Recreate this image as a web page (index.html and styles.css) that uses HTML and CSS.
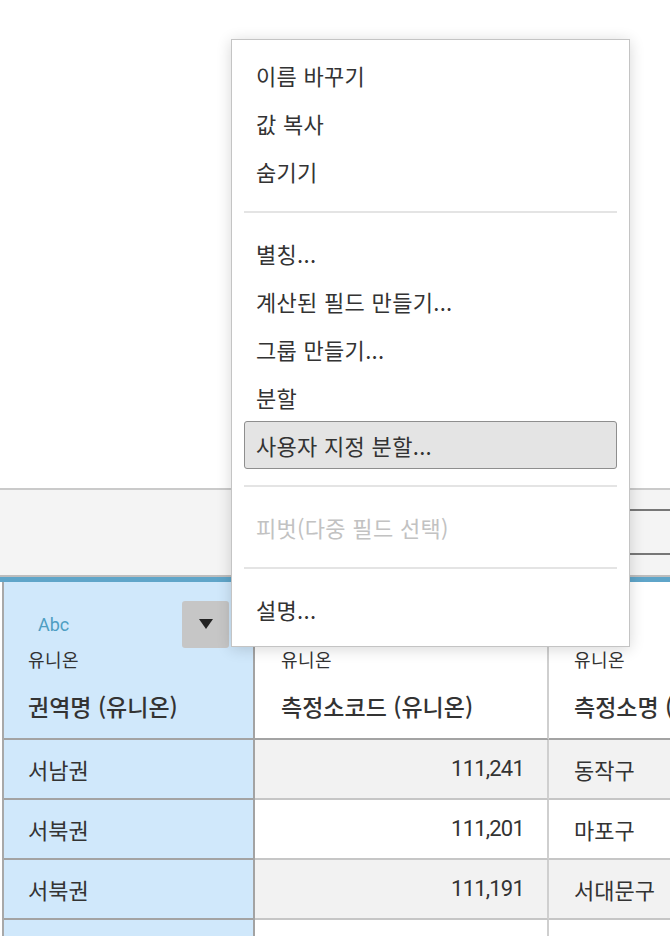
FILE: index.html
```html
<!DOCTYPE html>
<html lang="ko">
<head>
<meta charset="utf-8">
<link rel="stylesheet" href="styles.css">
</head>
<body>
<div class="page">
  <div class="top-space"></div>
  <div class="toolbar">
    <div class="searchbox"></div>
  </div>
  <div class="blue-band"></div>
  <div class="table">
    <div class="cell hcell c1 sel">
      <div class="h-top">
        <span class="abc">Abc</span>
        <span class="dd-btn"><svg width="14" height="10" viewBox="0 0 14 10"><path d="M0 0 H14 L7 10 Z" fill="#222"/></svg></span>
      </div>
      <div class="h-sub">유니온</div>
      <div class="h-title">권역명 (유니온)</div>
    </div>
    <div class="cell hcell c2">
      <div class="h-top"></div>
      <div class="h-sub">유니온</div>
      <div class="h-title">측정소코드 (유니온)</div>
    </div>
    <div class="cell hcell c3">
      <div class="h-top"></div>
      <div class="h-sub">유니온</div>
      <div class="h-title">측정소명 (유니온)</div>
    </div>

    <div class="cell c1 sel">서남권</div>
    <div class="cell c2 num odd">111,241</div>
    <div class="cell c3 odd">동작구</div>

    <div class="cell c1 sel">서북권</div>
    <div class="cell c2 num">111,201</div>
    <div class="cell c3">마포구</div>

    <div class="cell c1 sel">서북권</div>
    <div class="cell c2 num odd">111,191</div>
    <div class="cell c3 odd">서대문구</div>

    <div class="cell c1 sel"></div>
    <div class="cell c2 num"></div>
    <div class="cell c3"></div>
  </div>

  <div class="menu">
    <div class="item">이름 바꾸기</div>
    <div class="item">값 복사</div>
    <div class="item">숨기기</div>
    <div class="sep"></div>
    <div class="item">별칭...</div>
    <div class="item">계산된 필드 만들기...</div>
    <div class="item">그룹 만들기...</div>
    <div class="item">분할</div>
    <div class="item active">사용자 지정 분할...</div>
    <div class="sep"></div>
    <div class="item disabled">피벗(다중 필드 선택)</div>
    <div class="sep"></div>
    <div class="item">설명...</div>
  </div>
</div>
</body>
</html>
```

FILE: styles.css
```css
html, body {
  margin: 0;
  padding: 0;
  background: #ffffff;
}
body {
  width: 670px;
  height: 936px;
  overflow: hidden;
  font-family: "Noto Sans CJK KR", "Noto Sans", sans-serif;
  color: #333333;
}
.page {
  position: relative;
  width: 670px;
  height: 936px;
  overflow: hidden;
}
.top-space {
  height: 488px;
}
.toolbar {
  height: 66px;
  padding-top: 19px;
  background: #f4f4f4;
  border-top: 2px solid #cacaca;
  border-bottom: 2px solid #bdbdbd;
}
.searchbox {
  margin-left: 560px;
  width: 140px;
  height: 42px;
  border-top: 2px solid #777777;
  border-bottom: 2px solid #777777;
  border-left: 2px solid #777777;
  background: #f4f4f4;
}
.blue-band {
  height: 5px;
  background: #5fa5c9;
}
.table {
  display: grid;
  grid-template-columns: 251px 294px 1fr;
  margin-left: 2px;
  border-left: 2px solid #a8a8a8;
}
.cell {
  height: 58px;
  line-height: 58px;
  font-size: 22px;
  padding-left: 24px;
  border-bottom: 2px solid #c6c6c6;
  background: #ffffff;
  white-space: nowrap;
  overflow: hidden;
}
.c1 {
  border-right: 2px solid #a3a3a3;
  border-bottom-color: #a3a3a3;
}
.c2 {
  border-right: 2px solid #cfcfcf;
  padding-left: 26px;
}
.c3 {
  padding-left: 25px;
}
.sel {
  background: #d0e8fb;
}
.odd {
  background: #f2f2f2;
}
.num {
  text-align: right;
  padding-right: 23px;
  font-family: Roboto, "Noto Sans CJK KR", sans-serif;
  letter-spacing: -0.8px;
}
.hcell {
  height: 156px;
  line-height: normal;
  border-bottom: 2px solid #a3a3a3;
  display: flex;
  flex-direction: column;
}
.hcell.c2, .hcell.c3 {
  background: #ffffff;
}
.h-top {
  height: 48px;
  padding-top: 18px;
  padding-right: 24px;
  display: flex;
  align-items: center;
  justify-content: space-between;
}
.abc {
  margin-left: 10px;
  font-family: Roboto, sans-serif;
  font-size: 18px;
  color: #4e9ec2;
}
.dd-btn {
  width: 47px;
  height: 47px;
  border-radius: 3px;
  background: #c6c6c6;
  display: flex;
  align-items: center;
  justify-content: center;
}
.h-sub {
  height: 22px;
  line-height: 22px;
  font-size: 18px;
  letter-spacing: 0.5px;
}
.h-title {
  margin-top: 24px;
  height: 24px;
  line-height: 24px;
  font-size: 23px;
  font-weight: 500;
}
.menu {
  position: absolute;
  left: 231px;
  top: 39px;
  width: 399px;
  box-sizing: border-box;
  background: #ffffff;
  border: 1px solid #c4c4c4;
  padding: 11px 0 13px;
  box-shadow: 0 2px 14px rgba(0, 0, 0, 0.16);
}
.item {
  height: 48px;
  margin: 0 12px;
  padding-left: 12px;
  display: flex;
  align-items: center;
  font-size: 22px;
  letter-spacing: 0.3px;
  color: #333333;
  box-sizing: border-box;
}
.item.active {
  background: #e4e4e4;
  border: 1px solid #8e8e8e;
  border-radius: 3px;
  padding-left: 11px;
}
.item.disabled {
  color: #c2c2c2;
}
.sep {
  height: 2px;
  margin: 16px 12px;
  background: #e4e4e4;
}
```
